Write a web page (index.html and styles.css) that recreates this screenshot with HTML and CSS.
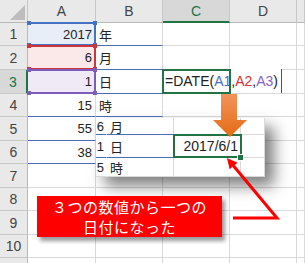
FILE: index.html
```html
<!DOCTYPE html>
<html>
<head>
<meta charset="utf-8">
<link rel="stylesheet" href="styles.css">
</head>
<body>
<div class="stage">
  <div class="sheet">
    <div class="corner"><svg width="27" height="22" viewBox="0 0 27 22"><polygon points="25,5 25,20 10,20" fill="#bdbdbd"/></svg></div>
    <div class="ch">A</div><div class="ch">B</div><div class="ch sel">C</div><div class="ch">D</div><div class="ch"></div>

    <div class="rh">1</div>
    <div class="c num bb ref r-blue">2017<i class="h tl"></i><i class="h tr"></i><i class="h bl"></i><i class="h br"></i></div>
    <div class="c jp bb">年</div><div class="c"></div><div class="c"></div><div class="c"></div>

    <div class="rh">2</div>
    <div class="c num bb ref r-red">6<i class="h tl"></i><i class="h tr"></i><i class="h bl"></i><i class="h br"></i></div>
    <div class="c jp bb">月</div><div class="c"></div><div class="c"></div><div class="c"></div>

    <div class="rh sel">3</div>
    <div class="c num bb ref r-purple">1<i class="h tl"></i><i class="h tr"></i><i class="h bl"></i><i class="h br"></i></div>
    <div class="c jp bb">日</div>
    <div class="c edit"><div class="fx">=DATE(<span class="k-blue">A1</span>,<span class="k-red">A2</span>,<span class="k-purple">A3</span>)</div></div>
    <div class="c"></div><div class="c"></div>

    <div class="rh">4</div>
    <div class="c num bb">15</div><div class="c jp bb">時</div><div class="c"></div><div class="c"></div><div class="c"></div>

    <div class="rh">5</div>
    <div class="c num bb">55</div><div class="c bb"></div><div class="c"></div><div class="c"></div><div class="c"></div>

    <div class="rh">6</div>
    <div class="c num bb">38</div><div class="c bb"></div><div class="c"></div><div class="c"></div><div class="c"></div>

    <div class="rh">7</div>
    <div class="c"></div><div class="c"></div><div class="c"></div><div class="c"></div><div class="c"></div>

    <div class="rh">8</div>
    <div class="c"></div><div class="c"></div><div class="c"></div><div class="c"></div><div class="c"></div>

    <div class="rh">9</div>
    <div class="c"></div><div class="c"></div><div class="c"></div><div class="c"></div><div class="c"></div>

    <div class="rh">10</div>
    <div class="c"></div><div class="c"></div><div class="c"></div><div class="c"></div><div class="c"></div>

    <div class="rh"></div>
    <div class="c"></div><div class="c"></div><div class="c"></div><div class="c"></div><div class="c"></div>
  </div>

  <div class="pic">
    <div class="p num pbb top nr">6</div><div class="p jp pbb top">月</div><div class="p top"></div><div class="p top"></div>
    <div class="p num pbb nr">1</div><div class="p jp pbb">日</div><div class="p num selcell">2017/6/1<i class="fill"></i></div><div class="p"></div>
    <div class="p num nr">5</div><div class="p jp">時</div><div class="p"></div><div class="p"></div>
  </div>

  <svg class="draw" width="305" height="263" viewBox="0 0 305 263">
    <defs>
      <linearGradient id="og" x1="0" y1="94" x2="0" y2="137" gradientUnits="userSpaceOnUse">
        <stop offset="0" stop-color="#f3935a"/>
        <stop offset="1" stop-color="#e56b14"/>
      </linearGradient>
    </defs>
    <path d="M221 94 H237 V120 H247 L230 137 L213 120 H221 Z" fill="url(#og)"/>
    <polyline points="233,218 277,218 233.4,165.7" fill="none" stroke="#ff0000" stroke-width="3" stroke-linejoin="miter"/>
    <polygon points="227,158 237.6,162.8 229.6,169.3" fill="#ff0000"/>
  </svg>

  <div class="callout">
    <div>３つの数値から一つの</div>
    <div>日付になった</div>
  </div>
</div>
</body>
</html>
```

FILE: styles.css
```css
body {
  margin: 0;
  background: #ffffff;
  font-family: "Liberation Sans", "Noto Sans CJK JP", sans-serif;
}

.stage {
  position: relative;
  width: 305px;
  height: 263px;
  overflow: hidden;
}

.sheet {
  display: grid;
  grid-template-columns: 28px 68px 67px 67px 67px 8px;
  grid-template-rows: 23px 23px 24px 24px 23px 24px 23px 24px 23px 24px 23px 24px;
}

.sheet > div {
  box-sizing: border-box;
  border-right: 1px solid #d9d9d9;
  border-bottom: 1px solid #d9d9d9;
}

.corner {
  background: #e9e9e9;
  border-right-color: #c4c4c4 !important;
  border-bottom-color: #b8b8b8 !important;
}

.corner svg {
  display: block;
}

.ch,
.rh {
  background: #e9e9e9;
  color: #444444;
  font-size: 14px;
  display: flex;
  align-items: center;
  justify-content: center;
}

.ch {
  border-right-color: #c8c8c8 !important;
  border-bottom-color: #b8b8b8 !important;
}

.rh {
  border-right-color: #b8b8b8 !important;
  border-bottom-color: #c8c8c8 !important;
}

.ch.sel {
  background: #d8d8d8;
  color: #217346;
  border-bottom: 2px solid #217346 !important;
}

.rh.sel {
  background: #d8d8d8;
  color: #217346;
  border-right: 2px solid #217346 !important;
}

.c {
  display: flex;
  align-items: center;
  padding: 0 3px;
  font-size: 13px;
  color: #222222;
}

.num {
  justify-content: flex-end;
}

.jp {
  font-family: "Noto Sans CJK JP", sans-serif;
  font-size: 13px;
}

.sheet > .bb {
  border-bottom: 1px solid #4a6db5;
}

.ref {
  position: relative;
}

.r-blue { background: #e8eef8; --rc: #4472c4; }
.r-red { background: #fbe9e9; --rc: #d0343a; }
.r-purple { background: #efeaf6; --rc: #7f5dbf; }

.ref::after {
  content: "";
  position: absolute;
  left: -1px;
  top: -1px;
  right: -1px;
  bottom: -1px;
  border: 2px solid var(--rc);
  border-left: none;
}

.h {
  position: absolute;
  width: 4px;
  height: 4px;
  background: var(--rc);
  z-index: 1;
}

.h.tl { left: -1px; top: -2px; }
.h.tr { right: -2px; top: -2px; }
.h.bl { left: -1px; bottom: -2px; }
.h.br { right: -2px; bottom: -2px; }

.edit {
  position: relative;
}

.fx {
  position: absolute;
  left: -1px;
  top: -1px;
  width: 120px;
  height: 24px;
  box-sizing: border-box;
  padding-left: 3px;
  background: #ffffff;
  border-right: 1px solid #555555;
  display: flex;
  align-items: center;
  white-space: nowrap;
  font-size: 14px;
  color: #222222;
  z-index: 1;
}

.edit::after {
  content: "";
  position: absolute;
  left: -1px;
  top: -1px;
  right: -2px;
  bottom: -1px;
  border: 2px solid #217346;
  z-index: 2;
}

.k-blue { color: #4472c4; }
.k-red { color: #d0343a; }
.k-purple { color: #8a63c8; }

.pic {
  position: absolute;
  left: 96px;
  top: 118px;
  width: 169px;
  height: 59px;
  background: #ffffff;
  box-shadow: 9px 9px 14px rgba(0, 0, 0, 0.5);
  overflow: hidden;
  display: grid;
  grid-template-columns: 11px 67px 67px 24px;
  grid-template-rows: 17px 23px 19px;
}

.p {
  box-sizing: border-box;
  border-right: 1px solid #d9d9d9;
  border-bottom: 1px solid #d9d9d9;
  display: flex;
  align-items: center;
  padding: 0 3px;
  font-size: 13px;
  color: #222222;
}

.p.nr {
  border-right-color: transparent;
}

.p.num {
  padding: 0 2px 0 0;
}

.p.top {
  align-items: flex-end;
  line-height: 15px;
  padding-bottom: 0;
}

.p.pbb {
  border-bottom: 1px solid #4a6db5;
}

.selcell {
  position: relative;
  font-size: 14px;
}

.selcell::after {
  content: "";
  position: absolute;
  left: -1px;
  top: -1px;
  right: -2px;
  bottom: -1px;
  border: 2px solid #217346;
}

.fill {
  position: absolute;
  right: -4px;
  bottom: -4px;
  width: 5px;
  height: 5px;
  background: #217346;
  border: 1px solid #ffffff;
  z-index: 1;
}

.draw {
  position: absolute;
  left: 0;
  top: 0;
  pointer-events: none;
}

.callout {
  position: absolute;
  left: 37px;
  top: 196px;
  width: 185px;
  height: 41px;
  box-sizing: border-box;
  background: #ff0000;
  color: #ffffff;
  font-family: "Noto Sans CJK JP", sans-serif;
  font-size: 15px;
  line-height: 20px;
  letter-spacing: 0.5px;
  text-align: center;
  padding-top: 1px;
  box-shadow: 3px 4px 4px rgba(0, 0, 0, 0.4);
}
```
